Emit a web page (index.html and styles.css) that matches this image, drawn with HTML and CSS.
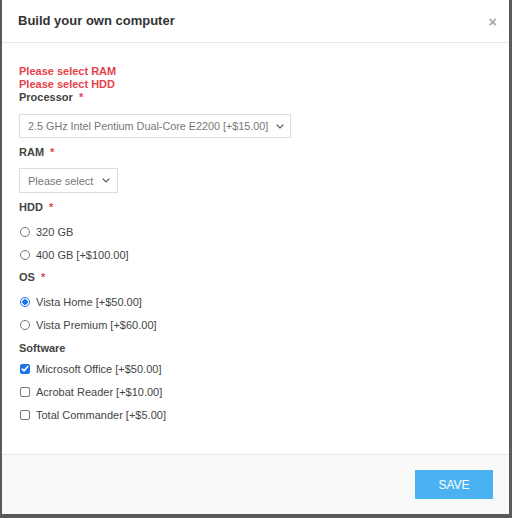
FILE: index.html
```html
<!DOCTYPE html>
<html>
<head>
<meta charset="UTF-8">
<link rel="stylesheet" href="styles.css">
</head>
<body>
<div class="modal">
	<div class="modal-header">
		<h2 class="modal-title">Build your own computer</h2>
		<span class="close">&times;</span>
	</div>
	<div class="modal-body">
		<div class="errors">
			<div>Please select RAM</div>
			<div>Please select HDD</div>
		</div>

		<div class="field">
			<label class="label">Processor <span class="req">*</span></label>
			<div class="select wide">
				<span>2.5 GHz Intel Pentium Dual-Core E2200 [+$15.00]</span>
				<svg class="chev" width="8" height="5" viewBox="0 0 8 5"><path d="M0.7 0.7 L4 4 L7.3 0.7" fill="none" stroke="#555" stroke-width="1.2"/></svg>
			</div>
		</div>

		<div class="field">
			<label class="label">RAM <span class="req">*</span></label>
			<div class="select narrow">
				<span>Please select</span>
				<svg class="chev" width="8" height="5" viewBox="0 0 8 5"><path d="M0.7 0.7 L4 4 L7.3 0.7" fill="none" stroke="#555" stroke-width="1.2"/></svg>
			</div>
		</div>

		<div class="field">
			<label class="label">HDD <span class="req">*</span></label>
			<div class="opt"><span class="radio"></span>320 GB</div>
			<div class="opt"><span class="radio"></span>400 GB [+$100.00]</div>
		</div>

		<div class="field os">
			<label class="label">OS <span class="req">*</span></label>
			<div class="opt"><span class="radio on"></span>Vista Home [+$50.00]</div>
			<div class="opt"><span class="radio"></span>Vista Premium [+$60.00]</div>
		</div>

		<div class="field">
			<label class="label sw">Software</label>
			<div class="opt"><span class="check on"><svg width="8" height="7" viewBox="0 0 8 7"><path d="M0.8 3.6 L3 5.8 L7.2 1" fill="none" stroke="#fff" stroke-width="1.5"/></svg></span>Microsoft Office [+$50.00]</div>
			<div class="opt"><span class="check"></span>Acrobat Reader [+$10.00]</div>
			<div class="opt"><span class="check"></span>Total Commander [+$5.00]</div>
		</div>
	</div>
	<div class="modal-footer">
		<button class="save">SAVE</button>
	</div>
</div>
</body>
</html>
```

FILE: styles.css
```css
html, body{
	margin:0;
	padding:0;
	height:100%;
}
body{
	background:#5a5a5a;
	font-family:"Liberation Sans", Arial, sans-serif;
	color:#444;
	font-size:11px;
}
.modal{
	margin:0 3px 0 2px;
	height:514px;
	background:#fff;
	border-radius:0 0 3px 3px;
	display:flex;
	flex-direction:column;
}
.modal-header{
	height:42px;
	border-bottom:1px solid #e9e9e9;
	display:flex;
	align-items:center;
	justify-content:space-between;
	padding:0 12px 0 16px;
}
.modal-title{
	margin:0;
	font-size:13px;
	font-weight:bold;
	color:#333;
	padding-bottom:1px;
}
.close{
	color:#aaa;
	font-size:15px;
	font-weight:bold;
	line-height:1;
}
.modal-body{
	flex:1;
	padding:22px 17px 0;
}
.errors{
	color:#e4434b;
	font-weight:bold;
	line-height:13px;
}
.label{
	display:block;
	font-weight:bold;
	color:#444;
	line-height:13px;
	margin-bottom:9px;
}
.errors + .field .label{
	margin-bottom:10px;
}
.label.sw{
	margin-bottom:5px;
}
.req{
	color:#e4434b;
	margin-left:3px;
}
.field{
	margin-bottom:8px;
}
.field.os{
	margin-bottom:9px;
}
.select{
	display:flex;
	align-items:center;
	justify-content:space-between;
	border:1px solid #ddd;
	box-sizing:border-box;
	padding:0 7px 0 8px;
	color:#777;
	white-space:nowrap;
}
.select.wide{
	width:272px;
	height:24px;
	font-size:10.8px;
}
.select.narrow{
	width:99px;
	height:25px;
}
.chev{
	margin-left:8px;
	flex:none;
}
.opt{
	display:flex;
	align-items:center;
	height:17px;
	margin-top:6px;
	color:#444;
	margin-left:1px;
}
.label + .opt{
	margin-top:0;
}
.radio{
	width:8px;
	height:8px;
	border:1px solid #777;
	border-radius:50%;
	margin-right:6px;
	flex:none;
}
.radio.on{
	border-color:#1a73e8;
	background:radial-gradient(circle, #1a73e8 0 2.5px, #fff 3px);
}
.check{
	width:8px;
	height:8px;
	border:1px solid #777;
	border-radius:2px;
	margin-right:6px;
	display:flex;
	align-items:center;
	justify-content:center;
	flex:none;
}
.check.on{
	background:#1a73e8;
	border-color:#1a73e8;
}
.modal-footer{
	height:59px;
	border-top:1px solid #e9e9e9;
	background:#f9f9f9;
	display:flex;
	align-items:center;
	justify-content:flex-end;
	padding:0 16px 0;
}
.save{
	width:78px;
	height:29px;
	border:0;
	background:#4ab2f1;
	color:#fff;
	font-family:"Liberation Sans", Arial, sans-serif;
	font-size:12px;
	cursor:pointer;
}
```
